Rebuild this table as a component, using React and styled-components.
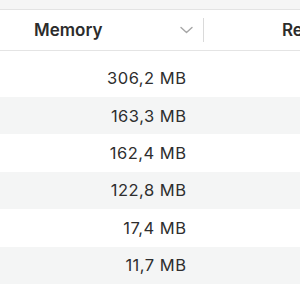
import React from "react";
import styled, { createGlobalStyle } from "styled-components";

const Global = createGlobalStyle`
  html, body { margin: 0; padding: 0; background: #ffffff; }
  body { width: 300px; height: 300px; overflow: hidden; font-family: Inter, "Noto Sans", "Liberation Sans", sans-serif; }
`;

const Page = styled.div`
  width: 300px;
  height: 300px;
  overflow: hidden;
  background: #ffffff;
  display: flex;
  flex-direction: column;
`;

const TopStrip = styled.div`
  height: 9px;
  flex: none;
  background: #f5f5f5;
  border-bottom: 1px solid #e3e3e3;
`;

const Header = styled.div`
  height: 40px;
  flex: none;
  display: grid;
  grid-template-columns: 203px 1px 1fr;
  align-items: center;
  border-bottom: 1px solid #e4e4e4;
  color: #2c2c2c;
  font-size: 17px;
  font-weight: 600;
`;

const HeaderCell = styled.div`
  display: flex;
  align-items: center;
  justify-content: ${(p) => (p.$sort ? "space-between" : "flex-start")};
  padding-left: ${(p) => p.$padLeft}px;
  padding-right: ${(p) => p.$padRight || 0}px;
  white-space: nowrap;
  overflow: hidden;
  min-width: 0;
`;

const Divider = styled.div`
  width: 1px;
  height: 24px;
  background: #dadada;
`;

const Body = styled.div`
  flex: 1;
  padding-top: 8.6px;
  display: flex;
  flex-direction: column;
`;

const Row = styled.div`
  height: 37.4px;
  flex: none;
  display: grid;
  grid-template-columns: 203px 1fr;
  align-items: center;
  background: ${(p) => (p.$alt ? "#f4f5f5" : "#ffffff")};
`;

const ValueCell = styled.div`
  text-align: right;
  padding-right: 16.5px;
  font-size: 16.5px;
  letter-spacing: 0.5px;
  font-weight: 400;
  color: #2e2e2e;
  white-space: nowrap;
`;

const Chevron = () => (
  <svg width="13" height="8" viewBox="0 0 13 8" fill="none">
    <path d="M1 1.5 L6.5 6.5 L12 1.5" stroke="#a6a6a6" strokeWidth="1.4" strokeLinecap="round" strokeLinejoin="round" />
  </svg>
);

const values = ["306,2 MB", "163,3 MB", "162,4 MB", "122,8 MB", "17,4 MB", "11,7 MB"];

export default function App() {
  return (
    <Page>
      <Global />
      <TopStrip />
      <Header>
        <HeaderCell $padLeft={34} $padRight={10} $sort>
          <span>Memory</span>
          <Chevron />
        </HeaderCell>
        <Divider />
        <HeaderCell $padLeft={78}>Real Mem</HeaderCell>
      </Header>
      <Body>
        {values.map((v, i) => (
          <Row key={v} $alt={i % 2 === 1}>
            <ValueCell>{v}</ValueCell>
            <div />
          </Row>
        ))}
      </Body>
    </Page>
  );
}
